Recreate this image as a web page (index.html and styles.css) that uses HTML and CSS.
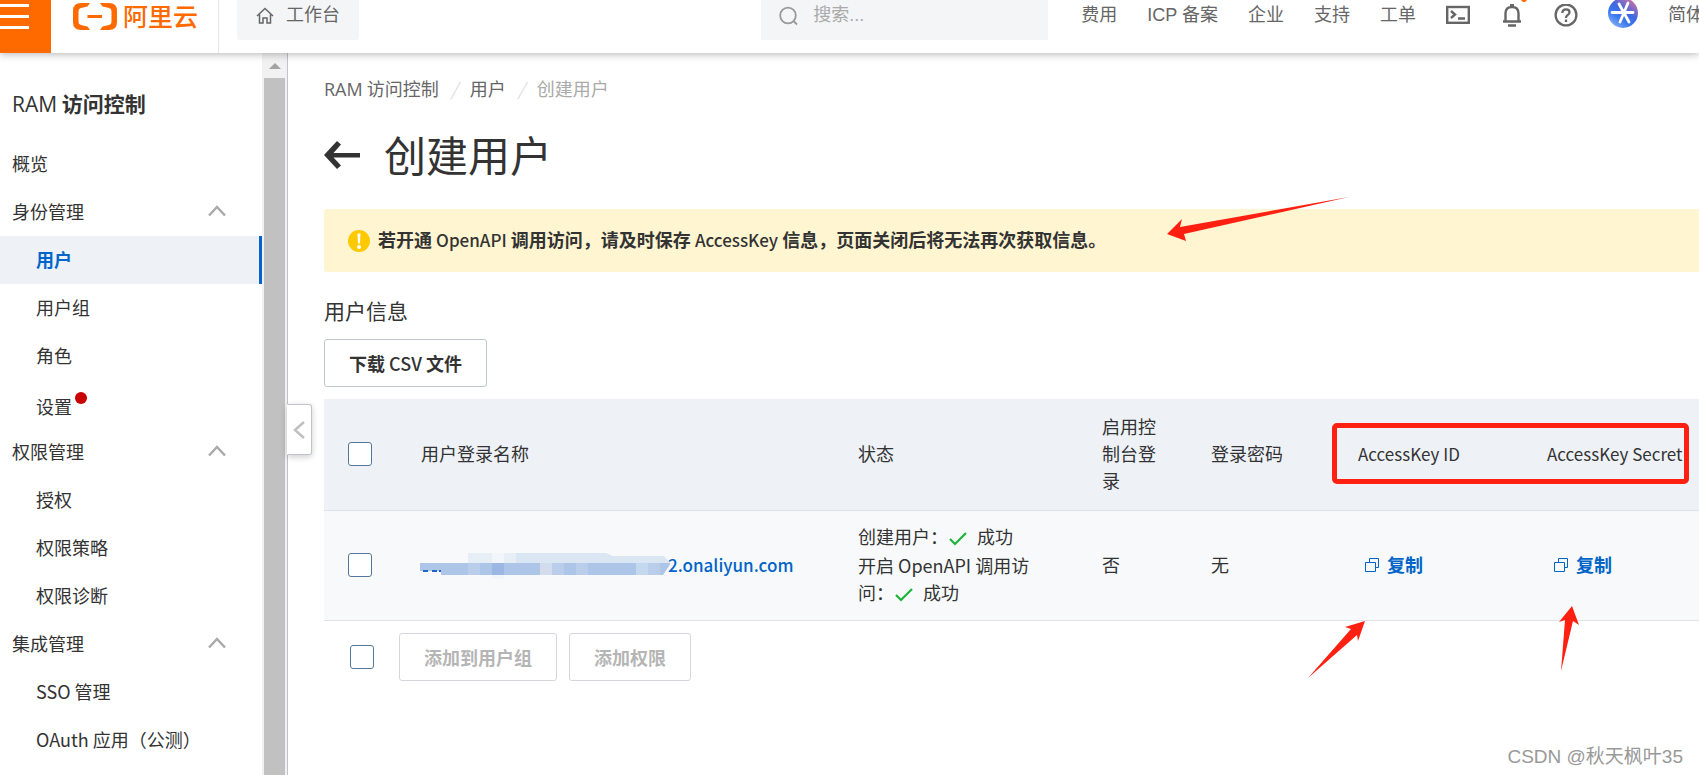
FILE: index.html
```html
<!DOCTYPE html>
<html lang="zh-CN">
<head>
<meta charset="utf-8">
<title>RAM 访问控制 - 创建用户</title>
<link rel="stylesheet" href="styles.css">
</head>
<body>
<header class="topbar">
  <button class="burger" aria-label="菜单"><i></i><i></i><i></i></button>
  <a class="logo" href="#">
    <svg width="44" height="28" viewBox="0 0 44 28" fill="#ff6a00"><path d="M17 0H8Q0 0 0 8V19Q0 27 8 27H17L14.500 23.500L8 22Q5.500 21.400 5.500 19V8Q5.500 5.600 8 5L14.500 3.500Z"/><path d="M27 0H36Q44 0 44 8V19Q44 27 36 27H27L29.500 23.500L36 22Q38.500 21.400 38.500 19V8Q38.500 5.600 36 5L29.500 3.500Z"/><rect x="14.500" y="12" width="14.500" height="3"/></svg>
    <span>阿里云</span>
  </a>
  <a class="workbench" href="#">
    <svg width="18" height="18" viewBox="0 0 18 18" fill="none" stroke="#666" stroke-width="1.500"><path d="M1 9L9 1.500L17 9M3.500 7.500V16H7V11H11V16H14.500V7.500"/></svg>
    <span>工作台</span>
  </a>
  <label class="search">
    <svg width="20" height="20" viewBox="0 0 20 20" fill="none" stroke="#999" stroke-width="1.800"><circle cx="9" cy="9.500" r="7.800"/><path d="M14.500 15L18 18.500"/></svg>
    <input type="text" placeholder="搜索..." aria-label="搜索">
  </label>
  <nav class="topnav">
    <a href="#">费用</a><a href="#">ICP 备案</a><a href="#">企业</a><a href="#">支持</a><a href="#">工单</a>
    <a href="#" aria-label="终端"><svg width="24" height="20" viewBox="0 0 24 20" fill="none" stroke="#666" stroke-width="2.400"><rect x="1.200" y="3" width="21.600" height="15.800"/><path d="M5 7L9 10.500L5 14M12 14.500H19"/></svg></a>
    <a class="bell" href="#" aria-label="消息"><svg width="24" height="26" viewBox="0 0 24 26" fill="none" stroke="#666" stroke-width="2.400"><path d="M3 17.500H21M5.500 17.500V9.500Q5.500 3 12 3Q18.500 3 18.500 9.500V17.500M10 1.200H14M8 21.500H16"/></svg><i></i></a>
    <a href="#" aria-label="帮助"><svg width="24" height="24" viewBox="0 0 24 24" fill="none" stroke="#666" stroke-width="2.300"><circle cx="12" cy="11" r="10.400"/><path d="M8.300 9Q8.500 5.300 12 5.300Q15.500 5.300 15.500 8.300Q15.500 10 13.700 11Q12 12 12 14M12 15.500V18"/></svg></a>
    <a class="avatar" href="#" aria-label="账号"><svg width="30" height="30" viewBox="0 0 30 30"><defs><linearGradient id="av" x1="0.900" y1="0" x2="0.200" y2="1"><stop offset="0" stop-color="#e8729a"/><stop offset="0.450" stop-color="#3f68e0"/><stop offset="0.700" stop-color="#3b7af0"/><stop offset="1" stop-color="#8db4f5"/></linearGradient></defs><circle cx="15" cy="15" r="15" fill="url(#av)"/><path d="M4 14.500H25M11 6L21 24M20 5L12 24" stroke="#fff" stroke-width="2.800" stroke-linecap="round"/></svg></a>
    <a href="#">简体</a>
  </nav>
</header>
<div class="body">
  <aside class="sidebar">
    <nav class="menu">
      <h2><span class="ram">RAM</span> <b>访问控制</b></h2>
      <a href="#">概览</a>
      <button>身份管理<svg width="20" height="14" viewBox="0 0 20 14"><path d="M2 11.500L10 3L18 11.500"/></svg></button>
      <a class="sub active" href="#">用户</a>
      <a class="sub" href="#">用户组</a>
      <a class="sub" href="#">角色</a>
      <a class="sub dotted" href="#">设置<i></i></a>
      <button>权限管理<svg width="20" height="14" viewBox="0 0 20 14"><path d="M2 11.500L10 3L18 11.500"/></svg></button>
      <a class="sub" href="#">授权</a>
      <a class="sub" href="#">权限策略</a>
      <a class="sub" href="#">权限诊断</a>
      <button>集成管理<svg width="20" height="14" viewBox="0 0 20 14"><path d="M2 11.500L10 3L18 11.500"/></svg></button>
      <a class="sub" href="#">SSO 管理</a>
      <a class="sub" href="#">OAuth 应用（公测）</a>
    </nav>
    <div class="scroll"><i class="up"></i><i class="thumb"></i></div>
    <button class="collapse" aria-label="收起"><svg width="12" height="20" viewBox="0 0 12 20"><path d="M11 2L2 10L11 18"/></svg></button>
  </aside>
  <main>
    <nav class="crumbs"><a href="#"><span class="ram">RAM</span> 访问控制</a><i>/</i><a href="#">用户</a><i>/</i><span class="current">创建用户</span></nav>
    <div class="title">
      <a href="#" aria-label="返回"><svg width="36" height="28" viewBox="0 0 36 28" fill="#333"><path d="M0 14L13 0L17 3.500L9.500 12H36V16.500H9.500L17 24.500L13 28Z"/></svg></a>
      <h1>创建用户</h1>
    </div>
    <div class="notice">
      <svg width="22" height="22" viewBox="0 0 22 22"><circle cx="11" cy="11" r="11" fill="#ffc900"/><path d="M9.500 3.500H12.500L12 13.500H10Z" fill="#fff"/><circle cx="11" cy="17" r="2" fill="#fff"/></svg>
      <p>若开通 <span>OpenAPI</span> 调用访问，请及时保存 <span>AccessKey</span> 信息，页面关闭后将无法再次获取信息。</p>
      <svg class="mark mark-notice" width="184" height="44" viewBox="0 0 184 44"><path d="M0 37L15 22L13 30L182 0L17 37L19 44Z"/></svg>
    </div>
    <h3>用户信息</h3>
    <button class="btn">下载 <span>CSV</span> 文件</button>
    <div class="tablewrap">
      <table>
        <colgroup><col class="c-check"><col><col class="c-state"><col class="c-console"><col class="c-pass"><col class="c-id"><col class="c-secret"></colgroup>
        <thead><tr><th><input type="checkbox" aria-label="全选"></th><th>用户登录名称</th><th>状态</th><th>启用控制台登录</th><th>登录密码</th><th class="key">AccessKey ID</th><th class="key">AccessKey Secret</th></tr></thead>
        <tbody><tr>
          <td><input type="checkbox" aria-label="选择用户"></td>
          <td><a class="user" href="#"><svg width="250" height="28" viewBox="0 0 250 28"><path fill="#dbe6f3" d="M48 2H186L193 5H244L250 12H48Z"/><path fill="#f2f6fb" d="M72 2H84V12H72ZM72 24H84V28H72Z"/><path fill="#e8eef6" d="M48 2H72V12H48ZM84 2H96V12H84Z"/><path fill="#adc6e8" d="M0 12H251L243 24H21V20H0Z"/><path fill="#9bb8e4" d="M72 12H84V24H72Z"/><path fill="#d2dced" d="M120 12H132V24H120Z"/><path fill="#bacdea" d="M48 12H60V24H48ZM132 12H144V24H132ZM156 12H168V24H156ZM228 12H240V24H228Z"/><path fill="#c4d8ee" d="M216 12H228V24H216Z"/><path fill="#1f66c8" d="M3 19H8V21H3ZM12 19H17V21H12ZM19 19H21V21H19Z"/></svg>2.onaliyun.com</a></td>
          <td><div class="line">创建用户：<svg class="ok" width="20" height="16" viewBox="0 0 20 16"><path d="M2 8L7 13L18 2"/></svg>成功</div><div>开启 OpenAPI 调用访问：<svg class="ok" width="20" height="16" viewBox="0 0 20 16"><path d="M2 8L7 13L18 2"/></svg>成功</div></td>
          <td>否</td><td>无</td>
          <td><button class="copy"><svg width="14" height="14" viewBox="0 0 14 14"><path d="M0.500 4.500H10.500V13.500H0.500ZM4.500 4V0.500H13.500V9.500H11"/></svg>复制</button></td>
          <td><button class="copy"><svg width="14" height="14" viewBox="0 0 14 14"><path d="M0.500 4.500H10.500V13.500H0.500ZM4.500 4V0.500H13.500V9.500H11"/></svg>复制</button></td>
        </tr></tbody>
      </table>
      <div class="markbox"></div>
      <svg class="mark mark-id" width="58" height="58" viewBox="0 0 58 58"><path d="M0 57L49 14L50 20L57 0L37 6L43 8Z"/></svg>
      <svg class="mark mark-secret" width="22" height="66" viewBox="0 0 22 66"><path d="M2 65L6 14L0 16L13 0L20 19L14 15Z"/></svg>
    </div>
    <div class="actions"><input type="checkbox" aria-label="选择全部"><button class="btn" disabled>添加到用户组</button><button class="btn" disabled>添加权限</button></div>
  </main>
</div>
<div class="watermark">CSDN @秋天枫叶35</div>
</body>
</html>
```
FILE: styles.css
```css
* { box-sizing: border-box; }
body {
  margin: 0;
  height: 100vh;
  display: flex;
  flex-direction: column;
  overflow: hidden;
  background: #fff;
  color: #333;
  font: 18px/27px "Noto Sans CJK SC", sans-serif;
}
a { color: inherit; text-decoration: none; }
button { font: inherit; color: inherit; background: none; border: 0; padding: 0; text-align: left; }
h1, h2, h3, p { margin: 0; font-weight: 400; }
svg { flex: none; }
.ram { font-family: "Open Sans", sans-serif; line-height: 1; }

.topbar {
  position: relative;
  z-index: 2;
  flex: none;
  height: 53px;
  display: flex;
  align-items: flex-start;
  background: #fff;
  box-shadow: 0 1px 8px rgba(0, 0, 0, .3);
  color: #666;
  font-family: "Liberation Sans", "Noto Sans CJK SC", sans-serif;
  line-height: 30px;
  white-space: nowrap;
}
.burger {
  width: 51px;
  height: 53px;
  background: #ff6a00;
  display: flex;
  flex-direction: column;
  gap: 8px;
  padding-top: 4px;
}
.burger i { width: 29px; height: 3px; background: #fff; }
.logo {
  width: 168px;
  height: 53px;
  padding-left: 22px;
  border-right: 1px solid #e5e5e5;
  display: flex;
  gap: 6px;
  color: #ff6a00;
  font-size: 25px;
  font-family: "Noto Sans CJK SC", sans-serif;
  font-weight: 500;
  line-height: 30px;
}
.logo svg { margin-top: 3px; }
.workbench {
  margin-left: 18px;
  height: 40px;
  padding: 0 19px;
  background: #f4f5f7;
  border-radius: 0 0 3px 3px;
  display: flex;
  gap: 12px;
}
.workbench svg { margin-top: 7px; }
.search {
  margin-left: auto;
  width: 287px;
  height: 40px;
  padding-left: 18px;
  background: #f4f5f7;
  display: flex;
  gap: 14px;
}
.search svg { margin-top: 6px; }
.search input {
  flex: 1;
  min-width: 0;
  height: 30px;
  padding: 0;
  border: 0;
  outline: 0;
  background: none;
  font: inherit;
}
.search input::placeholder { color: #aaa; opacity: 1; }
.topnav {
  display: flex;
  gap: 30px;
  margin: 0 -5px 0 33px;
}
.topnav svg { display: block; margin-top: 4px; }
.bell { position: relative; }
.bell i {
  position: absolute;
  right: -3px;
  top: -4px;
  width: 6px;
  height: 6px;
  border-radius: 50%;
  background: #ff6a00;
}
.topnav .avatar svg { margin-top: -2px; }

.body { flex: 1; min-height: 0; display: flex; }
.sidebar {
  position: relative;
  z-index: 1;
  flex: none;
  width: 288px;
  display: flex;
  border-right: 1px solid #c0c3cc;
}
.menu { flex: 1; padding-top: 34px; }
.menu h2 { height: 32px; padding: 0 12px; margin-bottom: 21px; font-size: 21px; line-height: 32px; }
.menu .ram { font-weight: 500; }
.menu a, .menu button {
  display: flex;
  align-items: center;
  width: 100%;
  height: 48px;
  padding: 0 35px 2px 12px;
}
.menu button { justify-content: space-between; }
.menu a.sub { padding-left: 36px; }
.menu a.active {
  background: #eef2f7;
  border-right: 3px solid #0064c8;
  color: #0064c8;
  font-weight: 700;
}
.menu path, .collapse path { fill: none; stroke: #aaa; stroke-width: 2.500; }
.menu a.dotted { padding-top: 6px; }
.dotted i { width: 12px; height: 12px; margin: 0 0 16px 3px; border-radius: 50%; background: #c80000; }
.scroll {
  width: 25px;
  padding: 10px 2px 0;
  background: #f1f1f1;
  display: flex;
  flex-direction: column;
  align-items: center;
  gap: 9px;
}
.up { border: 6px solid transparent; border-top: 0; border-bottom-color: #a3a3a3; }
.thumb { flex: 1; width: 100%; background: #c1c1c1; }
.collapse {
  position: absolute;
  left: 287px;
  top: 351px;
  width: 25px;
  height: 51px;
  padding-left: 5px;
  background: #fff;
  border: 1px solid #c0c3cc;
  border-left-color: #fff;
  border-radius: 0 3px 3px 0;
  box-shadow: 0 2px 6px rgba(0, 0, 0, .2);
  display: flex;
  align-items: center;
}
.collapse path { stroke: #c0c0c0; }

main { flex: 1; min-width: 0; padding: 22px 0 0 36px; }
.crumbs { display: flex; height: 27px; color: #666; }
.crumbs i { width: 31px; text-align: center; color: #ddd; }
.crumbs .current { color: #aaa; }
.title { display: flex; align-items: center; gap: 24px; margin: 21px 0 22px; }
.title svg { display: block; }
.title h1 { padding-bottom: 2px; font-size: 42px; line-height: 62px; }
.notice {
  position: relative;
  height: 63px;
  padding-left: 24px;
  display: flex;
  align-items: center;
  gap: 8px;
  background: #fff5d1;
  border-radius: 3px 0 0 3px;
  white-space: nowrap;
}
.notice p { font-weight: 700; padding-bottom: 2px; }
.notice span { font-size: 17px; font-weight: 500; }
.btn span { font-weight: 500; }
h3 { margin: 23px 0 14px; font-size: 21px; line-height: 30px; }
.btn {
  height: 48px;
  padding: 0 24px;
  border: 1px solid #c0c6cc;
  border-radius: 3px;
  background: #fff;
  font-weight: 700;
}
.btn:disabled { color: #b5b5b5; border-color: #d3d6da; }
.tablewrap { position: relative; margin-top: 12px; }
table { width: 100%; table-layout: fixed; border-collapse: collapse; }
.c-check { width: 73px; }
.c-state { width: 244px; }
.c-console { width: 109px; }
.c-pass { width: 147px; }
.c-id { width: 189px; }
.c-secret { width: 176px; }
th, td { padding: 14px 24px 16px; border-bottom: 1px solid #dfe2e6; text-align: left; font-weight: 400; }
th { background: #eef2f7; }
th:last-child { padding-right: 0; white-space: nowrap; }
.key { font-size: 17px; }
td { background: #f8f9fb; padding: 12px 24px 14px; }
input[type="checkbox"] {
  appearance: none;
  display: block;
  width: 24px;
  height: 24px;
  margin: 0;
  background: #fff;
  border: 1px solid #557799;
  border-radius: 3px;
}
.user { display: flex; align-items: center; color: #0064c8; font-size: 17px; font-weight: 500; }
.user svg { margin: 0 -2px 0 -1px; }
.line { height: 29px; }
.ok { margin-right: 9px; vertical-align: -3px; }
.ok path { fill: none; stroke: #1db33a; stroke-width: 2.200; }
.copy { display: flex; align-items: center; gap: 8px; padding-left: 7px; color: #0064c8; font-weight: 700; }
.copy path { fill: none; stroke: #0064c8; }
.actions { display: flex; align-items: center; margin-top: 12px; padding-left: 26px; gap: 12px; }
.actions input { margin-right: 13px; }

.mark { position: absolute; fill: #ff2012; }
.mark-notice { left: 843px; top: -12px; }
.markbox {
  position: absolute;
  right: 10px;
  top: 24px;
  width: 357px;
  height: 61px;
  border: 5px solid #ff2012;
  border-radius: 5px;
}
.mark-id { right: 333px; top: 222px; }
.mark-secret { right: 118px; top: 207px; }
.watermark {
  position: absolute;
  right: 16px;
  bottom: 4px;
  color: #999;
  font: 19px/28px "Liberation Sans", "Noto Sans CJK SC", sans-serif;
}
```
